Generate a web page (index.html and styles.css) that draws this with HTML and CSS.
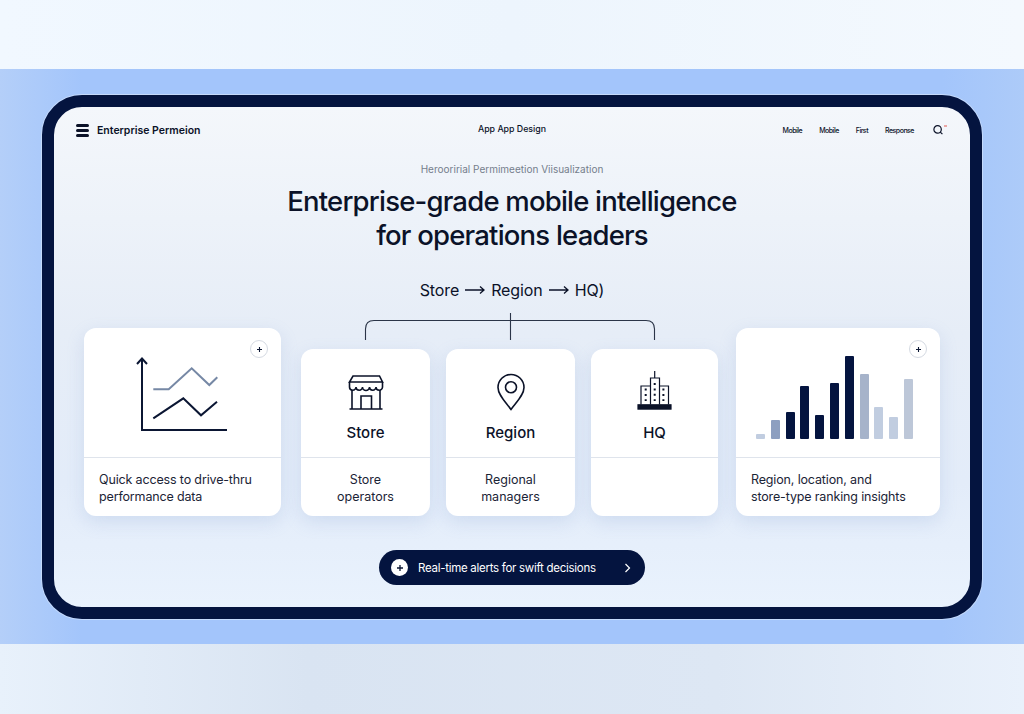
FILE: index.html
```html
<!DOCTYPE html>
<html lang="en">
<head>
  <meta charset="UTF-8" />
  <meta name="viewport" content="width=device-width, initial-scale=1.0" />
  <title>Enterprise Permeion</title>
  <link rel="stylesheet" href="styles.css">
</head>
<body>

  <div class="band-top"></div>

  <div class="stage">
    <div class="device">

      <!-- Header -->
      <header class="topbar">
        <div class="brand">
          <span class="brand-icon"><i></i><i></i><i></i></span>
          <span>Enterprise Permeion</span>
        </div>
        <div class="topbar-title">App App Design</div>
        <nav class="topnav">
          <a href="#">Mobile</a>
          <a href="#">Mobile</a>
          <a href="#">First</a>
          <a href="#">Response</a>
          <svg class="search-icon" width="15" height="12" viewBox="0 0 15 12" fill="none">
            <circle cx="4.6" cy="5.4" r="3.7" stroke="#0b1228" stroke-width="1.2"/>
            <path d="M7.3 8.1 9.4 10.2" stroke="#0b1228" stroke-width="1.2"/>
            <path d="M11 2h3" stroke="#e0584f" stroke-width="1"/>
          </svg>
        </nav>
      </header>

      <!-- Hero -->
      <p class="eyebrow">Herooririal Permimeetion Viisualization</p>
      <h1>Enterprise-grade mobile intelligence<br>for operations leaders</h1>
      <div class="flow-label">
        <span>Store</span>
        <svg width="20" height="10" viewBox="0 0 20 10" fill="none"><path d="M0 5H19M15 1.500 19 5 15 8.500" stroke="#0b1228" stroke-width="1.300"/></svg>
        <span>Region</span>
        <svg width="20" height="10" viewBox="0 0 20 10" fill="none"><path d="M0 5H19M15 1.500 19 5 15 8.500" stroke="#0b1228" stroke-width="1.300"/></svg>
        <span>HQ)</span>
      </div>

      <!-- Cards -->
      <section class="cards">
        <article class="card card-side card-left">
          <div class="card-top chart-top">
            <svg width="96" height="80" viewBox="134 354 96 80" fill="none">
              <path d="M142 359V430H227" stroke="#0b1633" stroke-width="2"/>
              <path d="M137 364 142 358.5 147 364" stroke="#0b1633" stroke-width="2"/>
              <path d="M153.3 389.3H168.7L191.7 368.3 209.3 385 217.3 377.3" stroke="#7688a5" stroke-width="2"/>
              <path d="M153.3 418.3 183.3 398.3 201 415.3 217 401.7" stroke="#0b1633" stroke-width="2"/>
            </svg>
            <span class="plus-badge"><svg width="7" height="7" viewBox="0 0 7 7"><path d="M3.5 1v5M1 3.5h5" stroke="#0b1633" stroke-width="1.1"/></svg></span>
          </div>
          <p class="card-text">Quick access to drive-thru<br>performance data</p>
        </article>

        <div class="tiers">
          <svg class="bracket" width="417" height="27" viewBox="301 313 417 27" fill="none">
            <path d="M365.5 340V329Q365.5 320.5 374 320.5H646Q654.5 320.5 654.5 329V340M510.5 313V340" stroke="#2b3548" stroke-width="1.1"/>
          </svg>
          <div class="tier-row">
            <article class="card tier tier-store">
              <div class="card-top tier-top">
                <svg width="42" height="42" viewBox="345 370 42 42" fill="none" stroke="#0b1228" stroke-width="1.6">
                  <path d="M353 376H379.500L382.500 382H349.500Z"/>
                  <path d="M349.500 382V387A3.200 3.200 0 0 0 356 387A3.200 3.200 0 0 0 362.500 387A3.200 3.200 0 0 0 369.500 387A3.200 3.200 0 0 0 376 387A3.200 3.200 0 0 0 382.500 387V382"/>
                  <path d="M352 390V409M380 390V409M349.500 409H382.500" />
                  <path d="M361 409V396H371.500V409"/>
                </svg>
                <h3>Store</h3>
              </div>
              <p class="card-text">Store<br>operators</p>
            </article>
            <article class="card tier tier-region">
              <div class="card-top tier-top">
                <svg width="42" height="42" viewBox="489.500 370 42 42" fill="none" stroke="#0b1228" stroke-width="1.6">
                  <path d="M510.500 409.500C505 402 497.500 395 497.500 387.500A13 13 0 0 1 523.500 387.500C523.500 395 516 402 510.500 409.500Z"/>
                  <circle cx="510.500" cy="387.300" r="5.500"/>
                </svg>
                <h3>Region</h3>
              </div>
              <p class="card-text">Regional<br>managers</p>
            </article>
            <article class="card tier tier-hq">
              <div class="card-top tier-top">
                <svg width="42" height="42" viewBox="634 370 42 42" fill="none" stroke="#0b1228" stroke-width="1.200">
                  <path d="M654.700 371V378M650.500 404.500V378H659.500V404.500M650.500 386H641V404.500M659.500 386H668.500V404.500"/>
                  <rect x="638" y="404.800" width="33" height="4.300" fill="#0b1228"/>
                  <path d="M654.700 383V401M645.700 388.500V401M663.400 388.500V401" stroke-width="2" stroke-dasharray="2 3.400"/>
                </svg>
                <h3>HQ</h3>
              </div>
              <p class="card-text"></p>
            </article>
          </div>
        </div>

        <article class="card card-side card-right">
          <div class="card-top bars-top">
            <div class="bars">
              <span class="bar bar-pale" style="height: 5px"></span>
              <span class="bar bar-mid" style="height: 19px"></span>
              <span class="bar bar-dark" style="height: 27px"></span>
              <span class="bar bar-dark" style="height: 53px"></span>
              <span class="bar bar-dark" style="height: 24px"></span>
              <span class="bar bar-dark" style="height: 56px"></span>
              <span class="bar bar-dark" style="height: 83px"></span>
              <span class="bar bar-soft" style="height: 65px"></span>
              <span class="bar bar-pale" style="height: 32px"></span>
              <span class="bar bar-pale" style="height: 22px"></span>
              <span class="bar bar-light" style="height: 60px"></span>
            </div>
            <span class="plus-badge"><svg width="7" height="7" viewBox="0 0 7 7"><path d="M3.500 1v5M1 3.500h5" stroke="#0b1633" stroke-width="1.100"/></svg></span>
          </div>
          <p class="card-text">Region, location, and<br>store-type ranking insights</p>
        </article>
      </section>

      <!-- Alert pill -->
      <a class="alert-pill" href="#">
        <span class="alert-plus"><svg width="8" height="8" viewBox="0 0 8 8"><path d="M4 1v6M1 4h6" stroke="#0b1633" stroke-width="1.300"/></svg></span>
        <span class="alert-text">Real-time alerts for swift decisions</span>
        <svg class="alert-chevron" width="7" height="10" viewBox="0 0 7 10" fill="none"><path d="M1.500 1 5.500 5 1.500 9" stroke="#fff" stroke-width="1.200"/></svg>
      </a>

    </div>
  </div>

  <div class="band-bottom"></div>

</body>
</html>
```

FILE: styles.css
```css
/* General Styles */
html, body {
  height: 100%;
}

body {
  margin: 0;
  display: flex;
  flex-direction: column;
  font-family: Inter, "Liberation Sans", sans-serif;
  color: #0b1228;
  background: #eef6fe;
  overflow: hidden;
}

p, h1, h3 {
  margin: 0;
}

a {
  color: inherit;
  text-decoration: none;
}

/* Page bands */
.band-top {
  height: 69px;
  background: linear-gradient(to right, #f1f8ff, #edf5fd 50%, #f4f9fe);
}

.band-bottom {
  flex: 1;
  background: linear-gradient(to right, #e8f1fb, #d9e4f2 30%, #dde7f4 70%, #e9f1fb);
}

.stage {
  height: 575px;
  box-sizing: border-box;
  padding: 26px 42px 25px;
  background: linear-gradient(to right, #b4cff9, #a3c5fb 8%, #a3c5fb 92%, #adcbf9);
}

/* Device frame */
.device {
  height: 100%;
  box-sizing: border-box;
  border: 12px solid #04143f;
  border-radius: 40px;
  padding: 0 30px;
  background: linear-gradient(to bottom, #f4f7fb, #e6edf7 45%, #e3ecf9 75%, #e9f2fd);
  box-shadow: 0 0 0 1px #c5dafb;
}

/* Header */
.topbar {
  display: grid;
  grid-template-columns: 1fr auto 1fr;
  align-items: center;
  height: 46px;
  margin: 0 -8px;
}

.brand {
  display: flex;
  align-items: center;
  gap: 8px;
  font-size: 10.5px;
  font-weight: 600;
}

.brand-icon {
  display: flex;
  flex-direction: column;
  gap: 2px;
  width: 13px;
}

.brand-icon i {
  height: 3px;
  border-radius: 2px;
  background: #0b1228;
}

.topbar-title {
  font-size: 8.8px;
  font-weight: 500;
  padding-bottom: 4px;
}

.topnav {
  display: flex;
  justify-content: flex-end;
  align-items: center;
  gap: 17px;
  font-size: 7px;
  font-weight: 500;
  letter-spacing: -0.5px;
}

.search-icon {
  margin-left: 2px;
}

/* Hero */
.eyebrow {
  margin-top: 8px;
  font-size: 10px;
  line-height: 16px;
  color: #757e8c;
  text-align: center;
}

h1 {
  margin-top: 7px;
  font-size: 27.5px;
  font-weight: 500;
  line-height: 34px;
  letter-spacing: -0.8px;
  text-align: center;
}

.flow-label {
  display: flex;
  justify-content: center;
  align-items: center;
  gap: 6px;
  margin-top: 28px;
  font-size: 16px;
  line-height: 20px;
  letter-spacing: -0.1px;
}

/* Cards */
.cards {
  display: flex;
  align-items: flex-end;
  margin-top: 13px;
}

.card {
  background: #fff;
  border-radius: 12px;
  box-shadow: 0 6px 18px rgba(120, 150, 205, 0.2);
}

.card-top {
  position: relative;
  box-sizing: border-box;
  border-bottom: 1.5px solid #dfe4ec;
}

.card-side .card-top {
  height: 130px;
}

.card-text {
  box-sizing: border-box;
  height: 58px;
  padding-top: 13px;
  font-size: 12.5px;
  line-height: 17px;
  letter-spacing: -0.15px;
  color: #1b2436;
}

.card-left {
  width: 197px;
  flex: none;
}

.card-right {
  width: 204px;
  flex: none;
}

.card-side .card-text {
  padding-left: 15px;
}

.chart-top {
  padding: 26px 0 0 50px;
}

.chart-top svg {
  display: block;
}

.bars-top {
  display: flex;
  align-items: flex-end;
  padding: 0 0 18px 20px;
}

.bars {
  display: flex;
  align-items: flex-end;
  gap: 5.8px;
}

.bar {
  width: 9px;
  border-radius: 1px;
}

.bar-dark { background: #04143f; }
.bar-mid { background: #8d9fc0; }
.bar-soft { background: #a6b3ca; }
.bar-pale { background: #c1cde0; }
.bar-light { background: #bdc7d8; }

.plus-badge {
  position: absolute;
  top: 12px;
  right: 13px;
  display: flex;
  align-items: center;
  justify-content: center;
  box-sizing: border-box;
  width: 18px;
  height: 18px;
  border: 1px solid #d5dae2;
  border-radius: 50%;
  background: #fff;
}

/* Store, Region, HQ */
.tiers {
  flex: none;
  width: 417px;
  margin: 0 18px 0 20px;
}

.bracket {
  display: block;
  margin-bottom: 9px;
}

.tier-row {
  display: flex;
  gap: 16px;
}

.tier {
  width: 129px;
  text-align: center;
}

.tier .card-text {
  letter-spacing: 0;
}

.tier-hq {
  width: 127px;
}

.tier-top {
  height: 109px;
  padding-top: 21px;
}

.tier-top svg {
  display: block;
  margin: 0 auto;
}

.tier-top h3 {
  margin-top: 11px;
  font-size: 15px;
  font-weight: 450;
  line-height: 20px;
}

/* Alert pill */
.alert-pill {
  display: flex;
  align-items: center;
  box-sizing: border-box;
  width: 266px;
  height: 35px;
  margin: 34px auto 0;
  padding: 0 14px 0 12px;
  border-radius: 18px;
  background: #04143f;
  color: #fff;
  font-size: 11.5px;
  letter-spacing: -0.28px;
}

.alert-plus {
  display: flex;
  align-items: center;
  justify-content: center;
  flex: none;
  width: 17px;
  height: 17px;
  border-radius: 50%;
  background: #fff;
}

.alert-text {
  flex: 1;
  margin-left: 10px;
}
```
